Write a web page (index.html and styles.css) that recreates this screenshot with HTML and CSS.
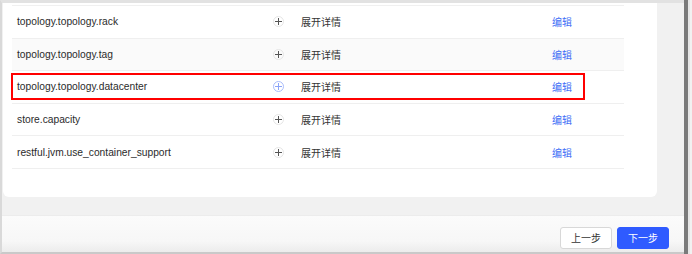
FILE: index.html
```html
<!DOCTYPE html>
<html lang="zh-CN">
<head>
    <meta charset="UTF-8">
    <title>参数配置</title>
    <link rel="stylesheet" href="styles.css">
</head>
<body>
    <div class="frame">
        <div class="main">
            <div class="content">
                <div class="card">
                    <div class="table">
                        <div class="row">
                            <span class="name">topology.topology.rack</span>
                            <span class="expand"><i class="plus"></i></span>
                            <span class="detail">展开详情</span>
                            <a class="edit">编辑</a>
                        </div>
                        <div class="row row-hover">
                            <span class="name">topology.topology.tag</span>
                            <span class="expand"><i class="plus"></i></span>
                            <span class="detail">展开详情</span>
                            <a class="edit">编辑</a>
                        </div>
                        <div class="row row-marked">
                            <span class="name">topology.topology.datacenter</span>
                            <span class="expand"><i class="plus plus-active"></i></span>
                            <span class="detail">展开详情</span>
                            <a class="edit">编辑</a>
                            <div class="mark"></div>
                        </div>
                        <div class="row">
                            <span class="name">store.capacity</span>
                            <span class="expand"><i class="plus"></i></span>
                            <span class="detail">展开详情</span>
                            <a class="edit">编辑</a>
                        </div>
                        <div class="row">
                            <span class="name">restful.jvm.use_container_support</span>
                            <span class="expand"><i class="plus"></i></span>
                            <span class="detail">展开详情</span>
                            <a class="edit">编辑</a>
                        </div>
                    </div>
                </div>
            </div>
            <div class="footer">
                <button class="btn">上一步</button>
                <button class="btn btn-primary">下一步</button>
            </div>
        </div>
        <div class="scrollbar"></div>
    </div>
</body>
</html>
```

FILE: styles.css
```css
html, body { margin: 0; padding: 0; }
body { width: 692px; height: 254px; overflow: hidden; background: #f1f1f1; font-family: "Liberation Sans", "Noto Sans CJK SC", sans-serif; font-size: 10px; color: #333; }
.frame { display: flex; height: 254px; }
.main { width: 684px; display: flex; flex-direction: column; border-top: 3px solid #e2e2e2; border-left: 2px solid #d9d9d9; border-bottom: 2px solid #c9c9c9; box-sizing: border-box; }
.scrollbar { width: 4px; background: #7a7a7a; border-right: 2px solid #e6e6e6; }
.content { padding: 0 27px 18px 1px; }
.card { background: #fff; border-radius: 0 0 6px 6px; padding: 2px 33px 28px 9px; }
.table { border-top: 1px solid #f0f0f0; }
.row { position: relative; display: grid; grid-template-columns: 256px 28px 251px 1fr; align-items: center; height: 32.6px; padding-left: 5px; border-bottom: 1px solid #efefef; box-sizing: border-box; }
.row-hover { background: #fafafa; }
.name { font-size: 10.25px; color: #2b2b2b; }
.expand { display: flex; align-items: center; }
.plus { position: relative; display: block; width: 9px; height: 9px; border: 1px solid #e6e6e6; border-radius: 50%; }
.plus::before, .plus::after { content: ""; position: absolute; left: 50%; top: 50%; background: #555; }
.plus::before { width: 7px; height: 1px; margin: -0.5px 0 0 -3.5px; }
.plus::after { width: 1px; height: 7px; margin: -3.5px 0 0 -0.5px; }
.plus-active { border-color: #a9bcfb; }
.plus-active::before, .plus-active::after { background: #8aa3f8; }
.detail { color: #333; }
.edit { color: #3d6df6; cursor: pointer; }
.mark { position: absolute; left: -1px; top: 2px; width: 574px; height: 27px; border: 2px solid #f00; box-sizing: border-box; }
.footer { flex: 1; display: flex; justify-content: flex-end; align-items: flex-start; gap: 5px; padding: 11px 15px 0 0; background: linear-gradient(#fbfbfb, #f7f7f7 70%, #ececec); border-top: 1px solid #ececec; }
.btn { height: 22px; width: 52px; padding: 0; border: 1px solid #d8d8d8; border-radius: 3px; background: #fff; color: #333; font-family: inherit; font-size: 10px; cursor: pointer; }
.btn-primary { background: #2f5bff; border-color: #2f5bff; color: #fff; }
```
